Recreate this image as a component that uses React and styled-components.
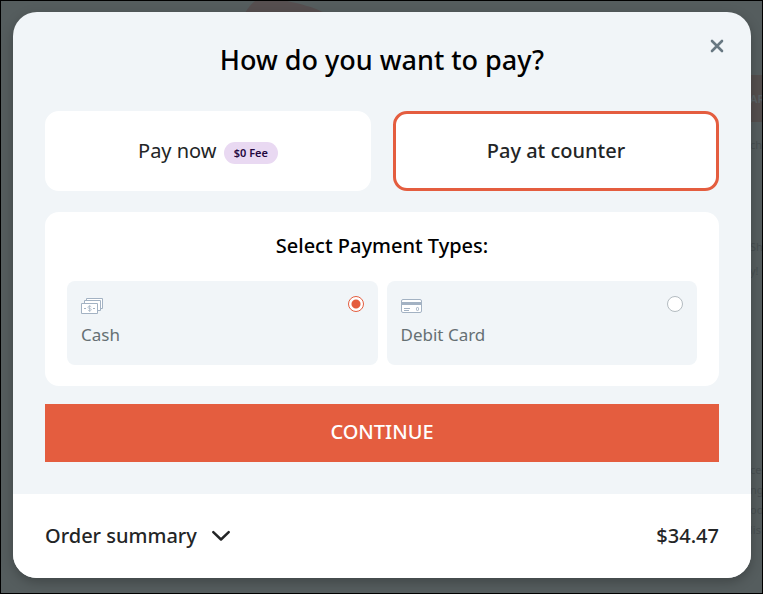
import React, { useState } from 'react';
import styled, { createGlobalStyle } from 'styled-components';

const GlobalStyle = createGlobalStyle`
    * {
        box-sizing: border-box;
    }

    body {
        margin: 0;
        font-family: 'Noto Sans', 'Open Sans', sans-serif;
        color: #232526;
    }

    button {
        font-family: inherit;
        color: inherit;
        cursor: pointer;
    }
`;

const Overlay = styled.div`
    position: relative;
    min-height: 100vh;
    padding: 11px 11px 15px 12px;
    border: 1px solid #000;
    background-color: #555d5e;
    overflow: hidden;
`;

//dimmed page behind the dialog
const Blob = styled.svg`
    position: absolute;
    top: 0;
    left: 244px;
`;

const PageText = styled.span`
    position: absolute;
    left: calc(100% - 12px);
    top: ${({ $top }) => $top}px;
    font-size: 11px;
    line-height: 16px;
    white-space: nowrap;
    color: #484f51;
`;

const PageButton = styled.div`
    position: absolute;
    top: 74px;
    right: 0;
    width: 16px;
    padding-left: 4px;
    font-size: 11px;
    font-weight: 600;
    line-height: 47px;
    overflow: hidden;
    color: #596265;
    background-color: #544f4e;
`;

const Modal = styled.div`
    position: relative;
    border-radius: 24px;
    overflow: hidden;
    background-color: #f1f5f8;
    box-shadow: 0 4px 12px rgba(0, 0, 0, 0.25);
`;

const Body = styled.div`
    padding: 28px 32px 32px;
`;

const Title = styled.h1`
    margin: 0 0 31px;
    font-size: 27px;
    font-weight: 500;
    line-height: 40px;
    text-align: center;
    color: #000;
`;

const CloseButton = styled.button`
    position: absolute;
    top: 22px;
    right: 22px;
    display: flex;
    padding: 0;
    border: none;
    background: none;
    color: #687882;
`;

const Methods = styled.div`
    display: grid;
    grid-template-columns: 1fr 1fr;
    gap: 22px;
    margin-bottom: 21px;
`;

const MethodButton = styled.button`
    height: 80px;
    padding: 0;
    border: 3px solid ${({ $active }) => ($active ? '#e45d3f' : '#fff')};
    border-radius: 14px;
    background-color: #fff;
    font-size: 20px;
    font-weight: ${({ $active }) => ($active ? 500 : 400)};
    line-height: 28px;
`;

const Badge = styled.span`
    display: inline-block;
    margin-left: 2px;
    padding: 0 10px;
    border-radius: 11px;
    background-color: #e9d9f2;
    font-size: 11px;
    font-weight: 600;
    line-height: 22px;
    vertical-align: middle;
    color: #24083f;
`;

const Panel = styled.fieldset`
    margin: 0 0 18px;
    min-width: 0;
    padding: 20px 22px 21px;
    border: none;
    border-radius: 14px;
    background-color: #fff;
`;

const PanelTitle = styled.legend`
    float: left;
    width: 100%;
    margin-bottom: 21px;
    padding: 0;
    font-size: 20px;
    font-weight: 500;
    line-height: 28px;
    text-align: center;
    color: #000;
`;

const Options = styled.div`
    clear: both;
    display: grid;
    grid-template-columns: 1fr 1fr;
    gap: 9px;
`;

const Option = styled.label`
    display: flex;
    justify-content: space-between;
    height: 84px;
    padding: 14px;
    border-radius: 8px;
    background-color: #f1f5f8;
    font-size: 17px;
    line-height: 24px;
    color: #667073;
    cursor: pointer;

    svg {
        display: block;
        margin: 3px 0 9px;
    }
`;

const Radio = styled.input`
    appearance: none;
    width: 16px;
    height: 16px;
    margin: 1px 0 0;
    border: 1px solid #b4bcc1;
    border-radius: 50%;
    background-color: #fff;

    &:checked {
        border-color: #e45d3f;
        background-image: radial-gradient(circle, #e45d3f 4px, #fff 5px);
    }
`;

const ContinueButton = styled.button`
    display: block;
    width: 100%;
    height: 58px;
    padding: 0 0 4px;
    border: none;
    background-color: #e45d3f;
    font-size: 20px;
    font-weight: 500;
    color: #fff;
`;

const Footer = styled.div`
    display: flex;
    align-items: center;
    justify-content: space-between;
    height: 84px;
    padding: 0 32px;
    background-color: #fff;
    font-size: 20px;
    font-weight: 500;
    line-height: 28px;
`;

const SummaryButton = styled.button`
    display: flex;
    align-items: center;
    gap: 14px;
    padding: 0;
    border: none;
    background: none;
    font-size: inherit;
    font-weight: inherit;
    line-height: inherit;
`;

const CashIcon = () => (
    <svg width="23" height="16" viewBox="0 0 23 16" fill="#fff" stroke="#a3b2c3">
        <path d="M5.5 .5h16v10h-16z" />
        <path d="M3.5 2.5h16v10h-16z" />
        <path d="M.5 5.5h16v10H.5z" />
        <path d="M3 10.5h2M12 10.5h2" />
        <path d="M10.3 9c-.3-.6-.9-.8-1.7-.8-1 0-1.7.4-1.7 1.1 0 1.6 3.4.8 3.4 2.4 0 .7-.7 1.1-1.7 1.1-.8 0-1.4-.3-1.7-.9M8.6 7.2v6.6" fill="none" strokeWidth=".8" />
    </svg>
);

const CardIcon = () => (
    <svg width="21" height="16" viewBox="0 0 21 16" fill="none" stroke="#a3b2c3">
        <rect x=".5" y="1.5" width="20" height="13" rx="1.5" fill="#fff" />
        <path d="M1 5.5h19" strokeWidth="3" />
        <path d="M3 10.5h6M3 12.5h5" />
        <rect x="15.5" y="9.5" width="2" height="3" rx=".8" />
    </svg>
);

const paymentTypes = [
    { id: 'cash', label: 'Cash', Icon: CashIcon },
    { id: 'debit', label: 'Debit Card', Icon: CardIcon },
];

const pageLines = [
    { top: 136, text: 'ch' },
    { top: 238, text: 'Sh' },
    { top: 262, text: 'y!' },
    { top: 461, text: 'ce' },
    { top: 481, text: 'ng' },
    { top: 501, text: 'oo' },
    { top: 521, text: 'lis' },
];

const App = () => {
    const [method, setMethod] = useState('counter');
    const [type, setType] = useState('cash');

    return (
        <>
            <GlobalStyle />
            <Overlay>
                <Blob width="90" height="20" viewBox="0 0 90 20" aria-hidden="true">
                    <path d="M0 12C3 7 6 3 10 0h32c14 3 26 6 38 12z" fill="#564f50" />
                </Blob>
                <PageButton aria-hidden="true">AR</PageButton>
                {pageLines.map((line) => (
                    <PageText key={line.top} $top={line.top} aria-hidden="true">
                        {line.text}
                    </PageText>
                ))}

                <Modal role="dialog" aria-labelledby="pay-title">
                    <Body>
                        <Title id="pay-title">How do you want to pay?</Title>
                        <CloseButton aria-label="Close">
                            <svg width="24" height="24" viewBox="0 0 24 24" stroke="currentColor" strokeWidth="2.6" strokeLinecap="round">
                                <path d="M7 7l10 10M17 7L7 17" />
                            </svg>
                        </CloseButton>
                        <Methods>
                            <MethodButton
                                $active={method === 'now'}
                                onClick={() => setMethod('now')}
                            >
                                Pay now <Badge>$0 Fee</Badge>
                            </MethodButton>
                            <MethodButton
                                $active={method === 'counter'}
                                onClick={() => setMethod('counter')}
                            >
                                Pay at counter
                            </MethodButton>
                        </Methods>
                        <Panel>
                            <PanelTitle>Select Payment Types:</PanelTitle>
                            <Options>
                                {paymentTypes.map(({ id, label, Icon }) => (
                                    <Option key={id} htmlFor={id}>
                                        <span>
                                            <Icon />
                                            {label}
                                        </span>
                                        <Radio
                                            type="radio"
                                            name="payment"
                                            id={id}
                                            checked={type === id}
                                            onChange={() => setType(id)}
                                        />
                                    </Option>
                                ))}
                            </Options>
                        </Panel>
                        <ContinueButton>CONTINUE</ContinueButton>
                    </Body>
                    <Footer>
                        <SummaryButton>
                            Order summary
                            <svg width="20" height="20" viewBox="0 0 20 20" fill="none" stroke="currentColor" strokeWidth="2.5" strokeLinecap="round" strokeLinejoin="round">
                                <path d="M2.3 6.2l7.7 7.3 7.7-7.3" />
                            </svg>
                        </SummaryButton>
                        <span>$34.47</span>
                    </Footer>
                </Modal>
            </Overlay>
        </>
    );
};

export default App;
